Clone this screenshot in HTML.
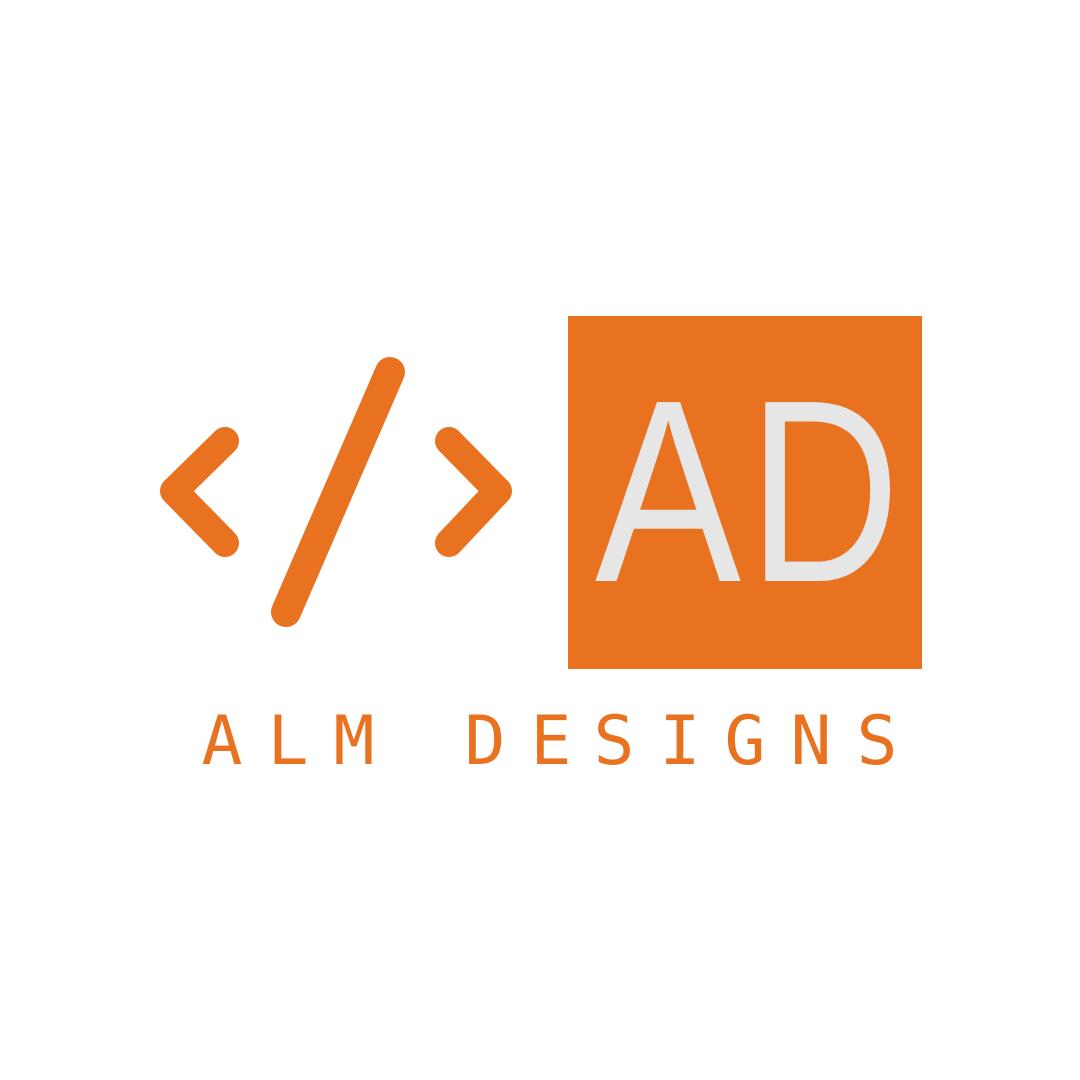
<!DOCTYPE html>
<html><head><meta charset="utf-8"><style>
html,body{margin:0;padding:0;background:#fff;}
svg{display:block}
</style></head><body>
<svg width="1080" height="1080" viewBox="0 0 1080 1080" xmlns="http://www.w3.org/2000/svg">
<rect width="1080" height="1080" fill="#fff"/>
<g stroke="#E87220" stroke-linecap="round" stroke-linejoin="round" fill="none">
<polyline points="225,441 174,491 225,543" stroke-width="28"/>
<polyline points="449,441 498,491 449,543" stroke-width="28"/>
<line x1="390" y1="372" x2="286" y2="612" stroke-width="30"/>
</g>
<rect x="568" y="316" width="354" height="353" fill="#E87220"/>
<g fill="#E6E6E6" font-family="Liberation Sans, sans-serif" font-size="260">
<text x="595" y="581" textLength="146" lengthAdjust="spacingAndGlyphs">A</text>
<text x="748" y="581" textLength="152" lengthAdjust="spacingAndGlyphs">D</text>
</g>
<text fill="#E87220" font-family="DejaVu Sans Mono, monospace" font-size="68" text-anchor="middle" y="764" x="222 288 354 485 551 614 680 745 811 877">ALMDESIGNS</text>
</svg>
</body></html>
